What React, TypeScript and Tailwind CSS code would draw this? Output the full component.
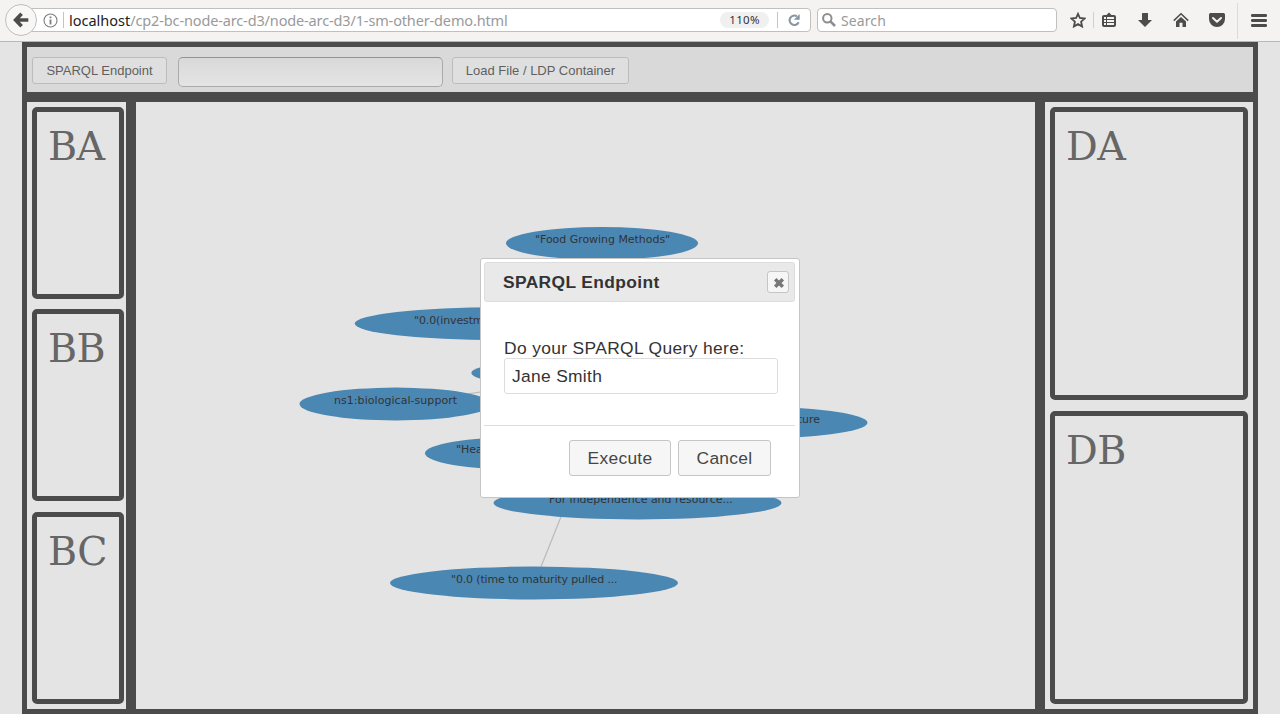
import React from "react";

type GraphNode = { cx: number; cy: number; rx: number; label?: string; tx?: number; ty?: number; end?: boolean; spacing?: number };

const nodes: GraphNode[] = [
  { cx: 602, cy: 243.3, rx: 96, label: '"Food Growing Methods"', tx: 535, ty: 243, spacing: -0.04 },
  { cx: 498.7, cy: 323.6, rx: 144, label: '"0.0(investment)', tx: 414, ty: 324, spacing: -0.12 },
  { cx: 615.3, cy: 373, rx: 144 },
  { cx: 395.5, cy: 404, rx: 96, label: "ns1:biological-support", tx: 334, ty: 404, spacing: 0.05 },
  { cx: 521, cy: 453.3, rx: 96, label: '"Health"', tx: 456, ty: 453 },
  { cx: 742.5, cy: 422.7, rx: 125, label: "agriculture", tx: 820, ty: 423, end: true },
  { cx: 637.5, cy: 503, rx: 144, label: "For independence and resource...", tx: 549, ty: 503, spacing: -0.02 },
  { cx: 534, cy: 583, rx: 144, label: '"0.0 (time to maturity pulled ...', tx: 451, ty: 583, spacing: -0.16 },
];

function BrowserBar() {
  return (
    <header className="flex h-[42px] shrink-0 items-start border-b border-[#b9b8b6] bg-[#f4f3f1] font-['Noto_Sans',sans-serif]">
      <div className="z-10 mt-1 ml-[5px] flex size-8 shrink-0 items-center justify-center rounded-full border border-[#c0bfbd] bg-[#f8f7f6]">
        <svg width="16" height="16" viewBox="0 0 16 16" fill="none" stroke="#4c4c4c" strokeWidth="3.6">
          <path d="M15.3 8H3M8.6 1.8L2.6 8l6 6.2" />
        </svg>
      </div>
      <div className="mt-2 -ml-1.5 flex h-6 w-[780px] shrink-0 items-center rounded-r-sm border border-[#c1c0be] bg-white pl-[11px]">
        <svg width="15" height="15" viewBox="0 0 15 15" className="shrink-0">
          <circle cx="7.5" cy="7.5" r="6.5" fill="none" stroke="#7d7d7d" strokeWidth="1.1" />
          <path d="M6.6 3.6h1.8v1.7H6.6zM6.6 6.4h1.8v5H6.6z" fill="#7d7d7d" />
        </svg>
        <div className="ml-[5px] h-4 w-px shrink-0 bg-[#c4c4c4]" />
        <div className="ml-[5px] w-[651px] shrink-0 text-[14.5px] leading-5 tracking-[-0.14px] whitespace-nowrap text-[#9a9a9a]">
          <span className="tracking-normal text-[#222]">localhost</span>/cp2-bc-node-arc-d3/node-arc-d3/1-sm-other-demo.html
        </div>
        <div className="flex h-4 w-[49px] shrink-0 items-center justify-center rounded-full bg-[#f0f0f0] text-[11.5px] tracking-[0.3px] text-[#333]">110%</div>
        <div className="ml-2 h-4 w-px shrink-0 bg-[#c4c4c4]" />
        <svg width="12" height="12" viewBox="0 0 12 12" className="ml-[10px] shrink-0">
          <path d="M10.6 8.2A4.7 4.7 0 1 1 8.9 2.3" fill="none" stroke="#8896a4" strokeWidth="2.1" />
          <path d="M11.7 0v5.8H5.9z" fill="#8896a4" />
        </svg>
      </div>
      <div className="mt-2 ml-1.5 flex h-6 w-60 shrink-0 items-center rounded-sm border border-[#c1c0be] bg-white pl-1">
        <svg width="14" height="14" viewBox="0 0 14 14" fill="none" stroke="#8e8e8e" className="shrink-0">
          <circle cx="5.3" cy="5.3" r="4.2" strokeWidth="2" />
          <path d="M8.2 8.2l4.8 4.8" strokeWidth="2.6" />
        </svg>
        <span className="ml-[5px] pt-px text-[14px] leading-5 tracking-[0.1px] text-[#9a9a9a]">Search</span>
      </div>
      <svg width="16" height="16" viewBox="0 0 16 16" className="mt-3 ml-[13px] shrink-0">
        <path d="M8 1.8l1.9 4.2 4.7.5-3.5 3.2 1 4.8L8 12.1l-4.100 2.400 1-4.800L1.400 6.500 6.100 6z" fill="none" stroke="#4c4c4c" strokeWidth="1.8" />
      </svg>
      <div className="mt-3 ml-[7px] h-4 w-px shrink-0 bg-[#d0cfcd]" />
      <svg width="16" height="16" viewBox="0 0 16 16" className="mt-3 ml-[7px] shrink-0">
        <path d="M3 3h2.500L8 .6 10.500 3H13a2 2 0 0 1 2 2v8a2 2 0 0 1-2 2H3a2 2 0 0 1-2-2V5a2 2 0 0 1 2-2z" fill="#4c4c4c" />
        <path d="M3 5h2v2H3zM6 5h7v2H6zM3 8h2v2H3zM6 8h7v2H6zM3 11h2v2H3zM6 11h7v2H6z" fill="#f4f3f1" />
      </svg>
      <svg width="16" height="16" viewBox="0 0 16 16" className="mt-3 ml-5 shrink-0" fill="#4c4c4c">
        <path d="M5 1.500a.5.5 0 0 1 .5-.5h5a.5.5 0 0 1 .5.500V8h4L8 15 1 8h4z" />
      </svg>
      <svg width="16" height="16" viewBox="0 0 16 16" className="mt-3 ml-5 shrink-0" fill="#4c4c4c">
        <path d="M8 4.900l5 4.600V15H9.500v-4.200h-3V15H3V9.500z" />
        <path d="M.8 8.600L8 1.800l7.200 6.800" fill="none" stroke="#4c4c4c" strokeWidth="1.500" />
      </svg>
      <svg width="18" height="16" viewBox="0 0 18 16" className="mt-3 ml-[19px] shrink-0">
        <path d="M2.500 1h13A1.500 1.500 0 0 1 17 2.500V7A8 8 0 0 1 1 7V2.500A1.500 1.500 0 0 1 2.500 1z" fill="#4c4c4c" />
        <path d="M5 6l4 3.800L13 6" fill="none" stroke="#f4f3f1" strokeWidth="2" strokeLinecap="round" strokeLinejoin="round" />
      </svg>
      <div className="mt-[3px] ml-[11px] h-9 w-px shrink-0 bg-[#dddbd9]" />
      <svg width="16" height="14" viewBox="0 0 16 14" className="mt-[14px] ml-[13px] shrink-0" fill="#4c4c4c">
        <rect width="16" height="3" rx="1.200" />
        <rect y="5" width="16" height="3" rx="1.200" />
        <rect y="10" width="16" height="3" rx="1.200" />
      </svg>
    </header>
  );
}

function Panel({ label, className }: { label: string; className: string }) {
  return (
    <div className={`shrink-0 rounded-[5px] border-[5px] border-[#4b4b4b] pt-[11px] pl-[11px] font-['DejaVu_Serif',serif] text-[39.6px] leading-[47px] tracking-[-0.5px] text-[#666] ${className}`}>
      {label}
    </div>
  );
}

function Graph() {
  return (
    <svg width="899" height="607" viewBox="136 102 899 607" className="block" fontFamily="'DejaVu Sans', sans-serif" fontSize="11">
      <g stroke="#bababa" strokeWidth="1.200" fill="none">
        <path d="M566.500 503L534.500 583" />
        <path d="M396 404L615 373" />
      </g>
      {nodes.map((n, i) => (
        <g key={i}>
          <ellipse cx={n.cx} cy={n.cy} rx={n.rx} ry={16.400} fill="#4a87b3" />
          {n.label && (
            <text x={n.tx} y={n.ty} fill="#333" textAnchor={n.end ? "end" : "start"} letterSpacing={n.spacing ?? 0}>
              {n.label}
            </text>
          )}
        </g>
      ))}
    </svg>
  );
}

function Dialog() {
  return (
    <div className="absolute top-[258px] left-[480px] flex h-60 w-80 flex-col rounded-[3px] border border-[#c5c5c5] bg-white p-[3px] text-[17.4px] text-[#333]">
      <div className="flex h-10 w-[311px] shrink-0 items-center justify-between rounded-[3px] border border-[#dddddd] bg-[#e9e9e9] pr-[5px] pl-[18px] font-bold">
        <span className="tracking-[0.37px]">SPARQL Endpoint</span>
        <button className="flex size-[22px] items-center justify-center rounded-[3px] border border-[#c5c5c5] bg-[#f6f6f6]">
          <svg width="12" height="12" viewBox="0 0 12 12" className="mt-0.5 ml-0.5">
            <path d="M2.200 2.200l7.600 7.600M9.800 2.200L2.200 9.800" stroke="#777" strokeWidth="3.500" />
          </svg>
        </button>
      </div>
      <label className="mt-9 ml-5 block h-5 leading-5 tracking-[0.36px] whitespace-nowrap">Do your SPARQL Query here:</label>
      <div className="ml-5 flex h-9 w-[274px] shrink-0 items-center rounded-[3px] border border-[#dddddd] bg-white pl-[7px] tracking-[0.32px]">Jane Smith</div>
      <div className="mt-[31px] flex w-[311px] gap-[7px] border-t border-[#dddddd] pt-[14px] pl-[85px] tracking-[0.3px] text-[#454545]">
        <button className="h-9 w-[102px] rounded-[3px] border border-[#c5c5c5] bg-[#f6f6f6]">Execute</button>
        <button className="h-9 w-[93px] rounded-[3px] border border-[#c5c5c5] bg-[#f6f6f6]">Cancel</button>
      </div>
    </div>
  );
}

export default function App() {
  return (
    <div className="relative flex h-[714px] w-[1280px] flex-col overflow-hidden bg-[#e4e4e4] font-['Liberation_Sans',sans-serif]">
      <BrowserBar />
      <main className="mx-[22px] flex flex-1 flex-col">
        <div className="flex h-[55px] shrink-0 items-start border-[5px] border-[#4b4b4b] bg-[#d9d9d9] pt-[10px] pl-[5px] text-[13px] text-[#5f5f5f]">
          <button className="h-[27px] w-[135px] rounded-[3px] border border-[#bcbcbc] bg-[#dfdfdf]">SPARQL Endpoint</button>
          <div className="ml-[11px] h-[30px] w-[265px] rounded-[5px] border border-[#aaaaaa] border-t-[#929292] bg-linear-to-b from-[#d9d9d9] to-[#e4e4e4]" />
          <button className="ml-[9px] h-[27px] w-[177px] rounded-[3px] border border-[#bcbcbc] bg-[#dfdfdf]">Load File / LDP Container</button>
        </div>
        <div className="flex flex-1">
          <div className="flex w-[109px] flex-col border-[5px] border-[#4b4b4b] pt-[5px] pl-[5px]">
            <Panel label="BA" className="h-48 w-[92px]" />
            <Panel label="BB" className="mt-[10px] h-48 w-[92px]" />
            <Panel label="BC" className="mt-[11px] h-48 w-[92px]" />
          </div>
          <div className="w-[909px] border-[5px] border-[#4b4b4b]">
            <Graph />
          </div>
          <div className="flex w-[218px] flex-col gap-[11px] border-[5px] border-[#4b4b4b] pt-[5px] pl-[5px]">
            <Panel label="DA" className="h-[293px] w-[198px]" />
            <Panel label="DB" className="h-[293px] w-[198px]" />
          </div>
        </div>
      </main>
      <Dialog />
    </div>
  );
}
